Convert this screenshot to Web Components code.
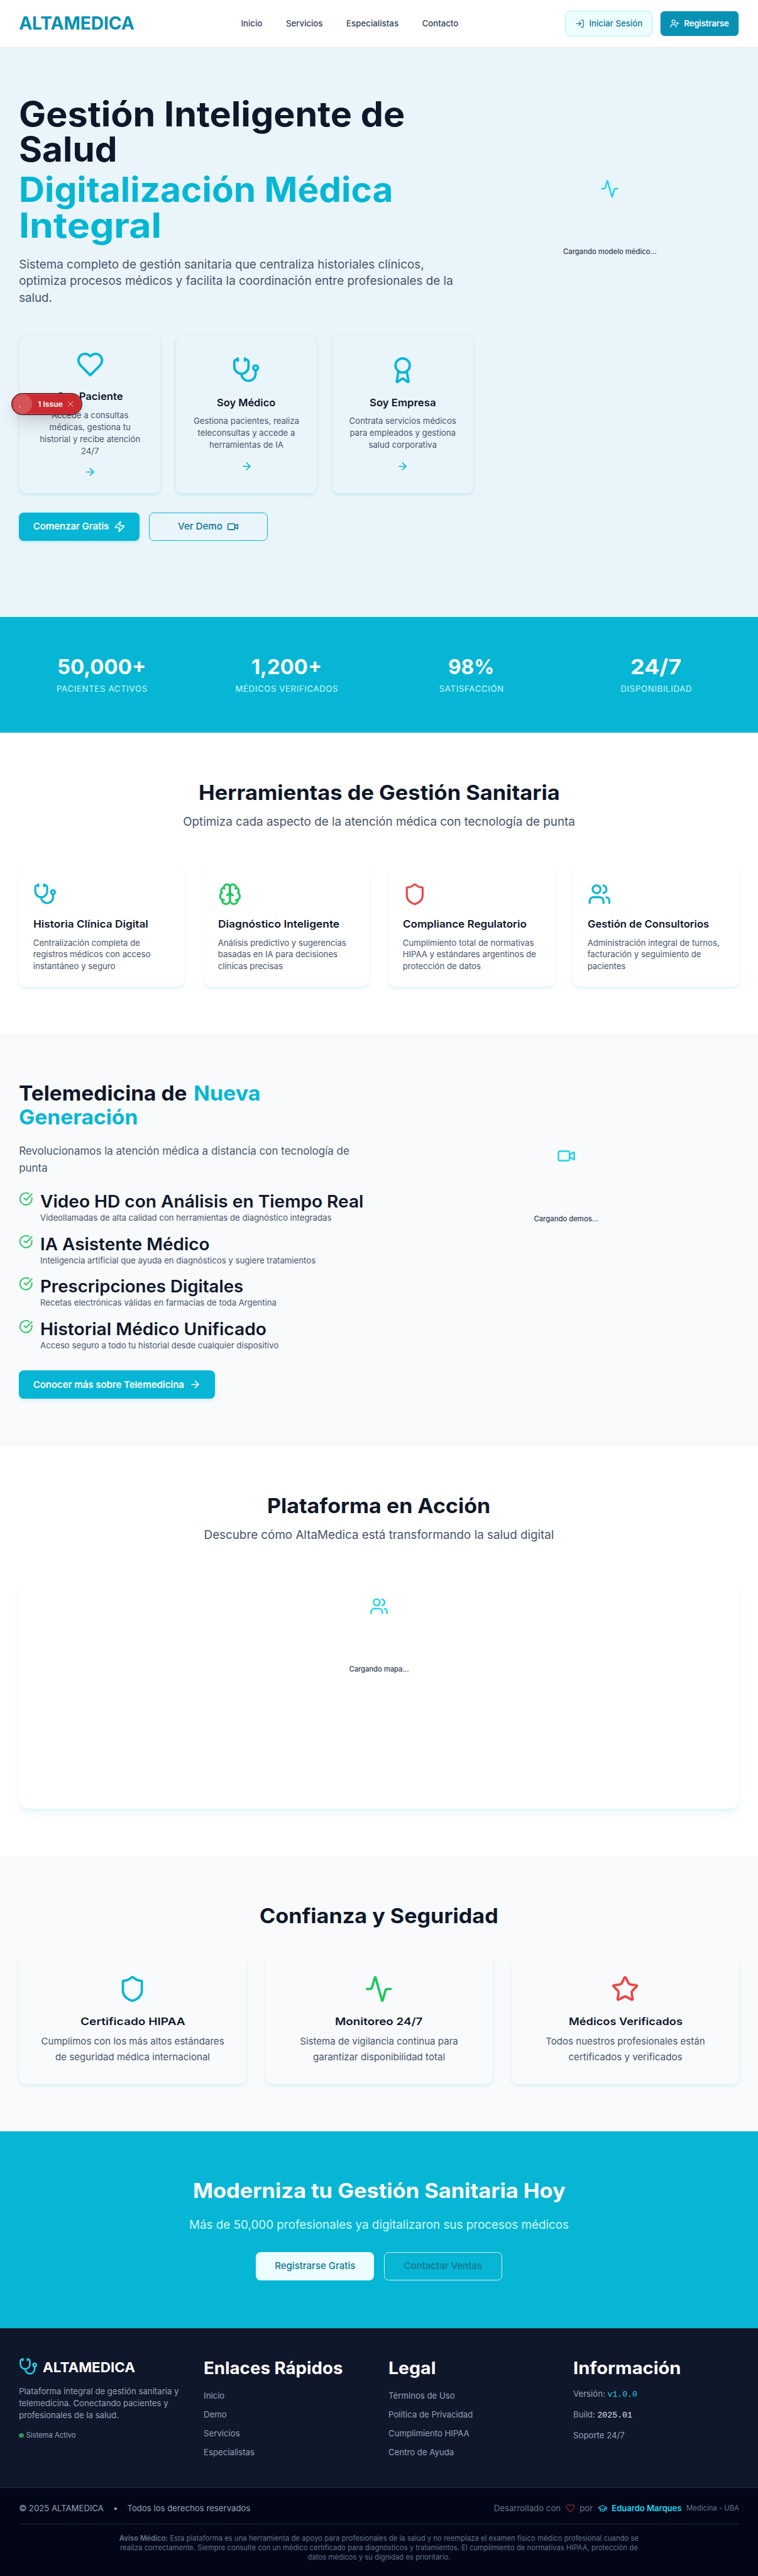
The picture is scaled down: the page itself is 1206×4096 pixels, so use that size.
<!DOCTYPE html>
<html lang="es"><head><meta charset="utf-8"><title>ALTAMEDICA</title>
<style>
html,body{margin:0;padding:0;background:#fff}
body{font-family:Inter,"Liberation Sans",sans-serif}
</style></head><body>
<a-app></a-app>
<script>
const ICONS={
activity:'<path d="M22 12h-2.48a2 2 0 0 0-1.93 1.46l-2.35 8.36a.25.25 0 0 1-.48 0L9.24 2.18a.25.25 0 0 0-.48 0l-2.35 8.36A2 2 0 0 1 4.49 12H2"/>',
heart:'<path d="M19 14c1.49-1.46 3-3.21 3-5.5A5.5 5.5 0 0 0 16.5 3c-1.76 0-3 .5-4.5 2-1.5-1.5-2.74-2-4.5-2A5.5 5.5 0 0 0 2 8.5c0 2.3 1.5 4.05 3 5.5l7 7Z"/>',
steth:'<path d="M11 2v2"/><path d="M5 2v2"/><path d="M5 3H4a2 2 0 0 0-2 2v4a6 6 0 0 0 12 0V5a2 2 0 0 0-2-2h-1"/><path d="M8 15a6 6 0 0 0 12 0v-3"/><circle cx="20" cy="10" r="2"/>',
award:'<path d="m15.477 12.89 1.515 8.526a.5.5 0 0 1-.81.47l-3.58-2.687a1 1 0 0 0-1.197 0l-3.586 2.686a.5.5 0 0 1-.81-.469l1.514-8.526"/><circle cx="12" cy="8" r="6"/>',
arrow:'<path d="M5 12h14"/><path d="m12 5 7 7-7 7"/>',
zap:'<path d="M4 14a1 1 0 0 1-.78-1.63l9.9-10.2a.5.5 0 0 1 .86.46l-1.92 6.02A1 1 0 0 0 13 10h7a1 1 0 0 1 .78 1.63l-9.9 10.2a.5.5 0 0 1-.86-.46l1.92-6.02A1 1 0 0 0 11 14z"/>',
video:'<path d="m16 13 5.223 3.482a.5.5 0 0 0 .777-.416V7.87a.5.5 0 0 0-.752-.432L16 10.5"/><rect x="2" y="6" width="14" height="12" rx="2"/>',
brain:'<path d="M12 5a3 3 0 1 0-5.997.125 4 4 0 0 0-2.526 5.77 4 4 0 0 0 .556 6.588A4 4 0 1 0 12 18Z"/><path d="M12 5a3 3 0 1 1 5.997.125 4 4 0 0 1 2.526 5.77 4 4 0 0 1-.556 6.588A4 4 0 1 1 12 18Z"/><path d="M15 13a4.5 4.5 0 0 1-3-4 4.5 4.5 0 0 1-3 4"/><path d="M17.599 6.5a3 3 0 0 0 .399-1.375"/><path d="M6.003 5.125A3 3 0 0 0 6.401 6.5"/><path d="M3.477 10.896a4 4 0 0 1 .585-.396"/><path d="M19.938 10.5a4 4 0 0 1 .585.396"/><path d="M6 18a4 4 0 0 1-1.967-.516"/><path d="M19.967 17.484A4 4 0 0 1 18 18"/>',
shield:'<path d="M20 13c0 5-3.5 7.5-7.66 8.95a1 1 0 0 1-.67-.01C7.5 20.5 4 18 4 13V6a1 1 0 0 1 1-1c2 0 4.5-1.2 6.24-2.72a1.17 1.17 0 0 1 1.52 0C14.51 3.81 17 5 19 5a1 1 0 0 1 1 1z"/>',
users:'<path d="M16 21v-2a4 4 0 0 0-4-4H6a4 4 0 0 0-4 4v2"/><circle cx="9" cy="7" r="4"/><path d="M22 21v-2a4 4 0 0 0-3-3.87"/><path d="M16 3.13a4 4 0 0 1 0 7.75"/>',
check:'<path d="M21.801 10A10 10 0 1 1 17 3.335"/><path d="m9 11 3 3L22 4"/>',
star:'<path d="M11.525 2.295a.53.53 0 0 1 .95 0l2.31 4.679a2.123 2.123 0 0 0 1.595 1.16l5.166.756a.53.53 0 0 1 .294.904l-3.736 3.638a2.123 2.123 0 0 0-.611 1.878l.882 5.14a.53.53 0 0 1-.771.56l-4.618-2.428a2.122 2.122 0 0 0-1.973 0L6.396 21.01a.53.53 0 0 1-.77-.56l.881-5.139a2.122 2.122 0 0 0-.611-1.879L2.16 9.795a.53.53 0 0 1 .294-.906l5.165-.755a2.122 2.122 0 0 0 1.597-1.16z"/>',
login:'<path d="M15 3h4a2 2 0 0 1 2 2v14a2 2 0 0 1-2 2h-4"/><path d="m10 17 5-5-5-5"/><path d="M15 12H3"/>',
userplus:'<path d="M16 21v-2a4 4 0 0 0-4-4H6a4 4 0 0 0-4 4v2"/><circle cx="9" cy="7" r="4"/><path d="M19 8v6M22 11h-6"/>',
cap:'<path d="M21.42 10.922a1 1 0 0 0-.019-1.838L12.83 5.18a2 2 0 0 0-1.66 0L2.6 9.08a1 1 0 0 0 0 1.832l8.57 3.908a2 2 0 0 0 1.66 0z"/><path d="M22 10v6"/><path d="M6 12.5V16a6 3 0 0 0 12 0v-3.5"/>',
close:'<path d="M3 3l18 18M21 3L3 21"/>'};

/* Stroke icon: <a-icon name size> */
customElements.define('a-icon',class extends HTMLElement{
 connectedCallback(){if(this.shadowRoot)return;const s=this.getAttribute('size')||24;
 this.attachShadow({mode:'open'}).innerHTML=`<style>:host{display:block;flex:none;width:${s}px;height:${s}px}svg{display:block}</style><svg width="${s}" height="${s}" viewBox="0 0 24 24" fill="none" stroke="currentColor" stroke-width="2" stroke-linecap="round" stroke-linejoin="round">${ICONS[this.getAttribute('name')]}</svg>`}});

/* One line of text set to a given measure: <a-line w>. Body text is tracked; "head" widens the heading face */
customElements.define('a-line',class extends HTMLElement{
 connectedCallback(){if(this.shadowRoot)return;
 const w=+this.getAttribute('w');
 this.attachShadow({mode:'open'}).innerHTML=`<style>:host{display:block;white-space:nowrap;width:${w}px;flex:none}:host([c]){margin:0 auto}i{display:block;width:100px;height:0}span{display:block;width:max-content}
 :host([head]) span{font-size:.965em;transform-origin:0 0}</style><span><slot></slot></span><i></i>`;
 const p=this.shadowRoot.querySelector('i'),s=this.shadowRoot.querySelector('span');
 const u=p.getBoundingClientRect().width/100;p.remove();
 const now=s.getBoundingClientRect().width/u;
 if(this.hasAttribute('head')){s.style.transform=`translateY(.024em) scaleX(${w/now})`;return}
 const ls=(w-now)/(this.textContent.length-1);
 s.style.letterSpacing=ls+'px';s.style.marginRight=-ls+'px';}});

const base=`:host{display:block}*{box-sizing:border-box}
section,div,p,h1,h2,h3,h4,ul,li{margin:0;padding:0}
h1,h2,h3,h4{color:#0f172a;font-weight:700}
h2{font-size:36px;line-height:40px}
.sub{font-size:20px;line-height:28px;color:#475569}`;
const def=(n,css,html)=>customElements.define(n,class extends HTMLElement{
 connectedCallback(){if(this.shadowRoot)return;
 this.attachShadow({mode:'open'}).innerHTML=`<style>${base}${css}</style>${typeof html=='function'?html(this):html}`}});

def('a-button',`:host{display:flex;align-items:center;justify-content:center;gap:8px;height:48px;border-radius:8px;font-size:16px;line-height:24px;font-weight:500;padding:0 24px;white-space:nowrap;box-sizing:border-box}
:host([kind=solid]){background:#06b6d4;color:#fff;font-weight:600;box-shadow:0 4px 6px -1px rgba(6,182,212,.12),0 2px 4px -1px rgba(6,182,212,.08)}
:host([kind=line]){border:2px solid #06b6d4;color:#0e7490;width:200px}
:host([kind=pale]){background:#ecfeff;color:#0e7490;width:200px}
:host([kind=ghost]){border:2px solid #e2e8f0;color:#0e7490;width:200px}
:host([kind=login]),:host([kind=join]){height:44px;font-size:14px;padding:0 16px}
:host([kind=login]){background:#ecfeff;border:1px solid #a5f3fc;color:#0e7490}
:host([kind=join]){background:#0891b2;border:1px solid #d5e3ec;color:#fff;font-weight:600}`,'<slot></slot>');

def('a-loader',`:host{display:flex;flex-direction:column;align-items:center;gap:82px;color:#22d3ee}
p{font-size:12px;line-height:16px;font-weight:500;color:#334155}`,
 e=>`<a-icon name="${e.getAttribute('icon')}" size="32"></a-icon><p><slot></slot></p>`);

def('a-header',`header{height:81px;border-bottom:1px solid #e2e8f0;background:#fff;display:flex;align-items:center;justify-content:space-between;padding:0 32px}
.logo{font-size:30px;font-weight:700;color:#0891b2;line-height:36px}
nav{display:flex;gap:40px;font-size:14px;line-height:20px;font-weight:500;color:#334155}
.a{display:flex;gap:12px}`,
`<header><a-line class="logo" w="195">ALTAMEDICA</a-line>
<nav><a-line w="36">Inicio</a-line><a-line w="62">Servicios</a-line><a-line w="88">Especialistas</a-line><a-line w="61">Contacto</a-line></nav>
<div class="a"><a-button kind="login"><a-icon name="login" size="16"></a-icon><a-line w="90">Iniciar Sesión</a-line></a-button><a-button kind="join"><a-icon name="userplus" size="16"></a-icon><a-line w="76">Registrarse</a-line></a-button></div></header>`);

def('a-role',`:host{display:flex;flex-direction:column;align-items:center;justify-content:center;height:268px;padding:24px;border:2px solid #e2e8f0;border-radius:12px;box-sizing:border-box;color:#06b6d4;text-align:center;box-shadow:0 4px 6px -1px rgba(6,182,212,.1),0 2px 4px -1px rgba(6,182,212,.06)}
h3{font-size:18px;line-height:28px;font-weight:600;margin:16px 0 8px}
p{font-size:14px;line-height:20px;color:#475569;margin-bottom:16px;white-space:nowrap}`,
 e=>`<a-icon name="${e.getAttribute('icon')}" size="48"></a-icon><h3><a-line head w="${e.getAttribute('w')}">${e.getAttribute('label')}</a-line></h3><p><slot></slot></p><a-icon name="arrow" size="20"></a-icon>`);

def('a-hero',`section{background:#eaf5fb;height:960px;padding:80px 32px 0;display:flex;gap:12px}
.l{width:768px;flex:none}.r{flex:1;padding-top:142px}
h1{font-size:60px;line-height:60px}
.cy{color:#06b6d4;margin-top:8px}
.sub{margin:24px 0 48px}
.cards{display:grid;grid-template-columns:repeat(3,1fr);gap:24px}
.b{display:flex;gap:16px;margin-top:32px}`,
`<section><div class="l"><h1><a-line head w="652">Gestión Inteligente de</a-line><a-line head w="166">Salud</a-line>
<div class="cy"><a-line head w="632">Digitalización Médica</a-line><a-line head w="241">Integral</a-line></div></h1>
<div class="sub"><a-line w="684">Sistema completo de gestión sanitaria que centraliza historiales clínicos,</a-line><a-line w="733">optimiza procesos médicos y facilita la coordinación entre profesionales de la</a-line><a-line w="56">salud.</a-line></div>
<div class="cards">
<a-role icon="heart" label="Soy Paciente" w="111">Accede a consultas<br>médicas, gestiona tu<br>historial y recibe atención<br>24/7</a-role>
<a-role icon="steth" label="Soy Médico" w="99">Gestiona pacientes, realiza<br>teleconsultas y accede a<br>herramientas de IA</a-role>
<a-role icon="award" label="Soy Empresa" w="112">Contrata servicios médicos<br>para empleados y gestiona<br>salud corporativa</a-role></div>
<div class="b"><a-button kind="solid"><a-line w="128">Comenzar Gratis</a-line><a-icon name="zap" size="20"></a-icon></a-button><a-button kind="line"><a-line w="75">Ver Demo</a-line><a-icon name="video" size="20"></a-icon></a-button></div>
</div><div class="r"><a-loader icon="activity"><a-line w="158">Cargando modelo médico...</a-line></a-loader></div></section>`);

def('a-stats',`section{background:#06b6d4;height:196px;padding:64px 32px;display:grid;grid-template-columns:repeat(4,1fr);gap:32px}
b{display:block;font-size:36px;line-height:40px;font-weight:700;color:#fff;margin-bottom:8px}
p{font-size:14px;line-height:20px;color:#cffafe}`,
'<section>'+[['50,000+',150,'PACIENTES ACTIVOS',153],['1,200+',119,'MÉDICOS VERIFICADOS',173],['98%',78,'SATISFACCIÓN',109],['24/7',86,'DISPONIBILIDAD',120]].map(s=>`<div><b><a-line c head w="${s[1]}">${s[0]}</a-line></b><p><a-line c w="${s[3]}">${s[2]}</a-line></p></div>`).join('')+'</section>');

def('a-features',`section{height:508px;padding:80px 32px;background:#fff}
.sub{margin:16px 0 64px}
.g{display:grid;grid-template-columns:repeat(4,1fr);gap:32px}
.k{height:200px;padding:24px;border-radius:12px;box-shadow:0 4px 6px -1px rgba(6,182,212,.1),0 2px 4px -1px rgba(6,182,212,.06)}
h3{font-size:18px;line-height:28px;font-weight:600;margin:16px 0 8px}
p{font-size:14px;line-height:20px;color:#475569;white-space:nowrap}`,
`<section><h2><a-line c head w="610">Herramientas de Gestión Sanitaria</a-line></h2><div class="sub"><a-line c w="662">Optimiza cada aspecto de la atención médica con tecnología de punta</a-line></div><div class="g">`+
[['steth','#06b6d4','Historia Clínica Digital',194,'Centralización completa de<br>registros médicos con acceso<br>instantáneo y seguro'],
['brain','#22c55e','Diagnóstico Inteligente',205,'Análisis predictivo y sugerencias<br>basadas en IA para decisiones<br>clínicas precisas'],
['shield','#ef4444','Compliance Regulatorio',209,'Cumplimiento total de normativas<br>HIPAA y estándares argentinos de<br>protección de datos'],
['users','#06b6d4','Gestión de Consultorios',205,'Administración integral de turnos,<br>facturación y seguimiento de<br>pacientes']].map(f=>`<div class="k"><a-icon name="${f[0]}" size="40" style="color:${f[1]}"></a-icon><h3><a-line head w="${f[3]}">${f[2]}</a-line></h3><p>${f[4]}</p></div>`).join('')+'</div></section>');

def('a-tele',`section{height:696px;padding:80px 32px;background:#f8fafc;display:flex;gap:48px}
section>div{flex:1}
.t{display:flex;gap:11px}.c{color:#06b6d4}
.lead{font-size:18px;line-height:28px;color:#475569;margin:24px 0}
ul{list-style:none;display:flex;flex-direction:column;gap:16px;margin-bottom:32px}
li{display:flex;gap:12px;color:#22c55e}
li a-icon{margin-top:2px}
h4{font-size:30px;line-height:36px;font-weight:600}
p{font-size:14px;line-height:20px;color:#475569}
section>.r{padding-top:110px}a-button{width:331px}`,
`<section><div><h2><div class="t"><a-line head w="284">Telemedicina de</a-line><a-line head class="c" w="113">Nueva</a-line></div><a-line head class="c" w="201">Generación</a-line></h2>
<div class="lead"><a-line w="558">Revolucionamos la atención médica a distancia con tecnología de</a-line>punta</div><ul>`+
[['Video HD con Análisis en Tiempo Real',546,'Videollamadas de alta calidad con herramientas de diagnóstico integradas'],['IA Asistente Médico',286,'Inteligencia artificial que ayuda en diagnósticos y sugiere tratamientos'],['Prescripciones Digitales',343,'Recetas electrónicas válidas en farmacias de toda Argentina'],['Historial Médico Unificado',382,'Acceso seguro a todo tu historial desde cualquier dispositivo']].map(f=>`<li><a-icon name="check" size="24"></a-icon><div><h4><a-line head w="${f[1]}">${f[0]}</a-line></h4><p>${f[2]}</p></div></li>`).join('')+
`</ul><a-button kind="solid"><a-line w="255">Conocer más sobre Telemedicina</a-line><a-icon name="arrow" size="20"></a-icon></a-button></div>
<div class="r"><a-loader icon="video"><a-line w="109">Cargando demos...</a-line></a-loader></div></section>`);

def('a-platform',`section{height:692px;padding:80px 32px;background:#fff}
.sub{margin:16px 0 64px}
.m{height:384px;border-radius:16px;padding-top:26px;box-shadow:0 10px 15px -3px rgba(6,182,212,.1),0 4px 6px -2px rgba(6,182,212,.05)}`,
`<section><h2><a-line c head w="377">Plataforma en Acción</a-line></h2><div class="sub"><a-line c w="591">Descubre cómo AltaMedica está transformando la salud digital</a-line></div>
<div class="m"><a-loader icon="users"><a-line w="101">Cargando mapa...</a-line></a-loader></div></section>`);

def('a-trust',`section{height:464px;padding:80px 32px;background:#f8fafc}
.g{display:grid;grid-template-columns:repeat(3,1fr);gap:32px;margin-top:48px}
.k{height:216px;padding:32px;border-radius:12px;display:flex;flex-direction:column;align-items:center;box-shadow:0 4px 6px -1px rgba(6,182,212,.1),0 2px 4px -1px rgba(6,182,212,.06)}
h3{font-size:18px;line-height:28px;font-weight:600;margin:16px 0 8px}
p{font-size:16px;line-height:26px;color:#475569}`,
`<section><h2><a-line c head w="403">Confianza y Seguridad</a-line></h2><div class="g">`+
[['shield','#06b6d4','Certificado HIPAA',177,['Cumplimos con los más altos estándares',309],['de seguridad médica internacional',261]],['activity','#22c55e','Monitoreo 24/7',148,['Sistema de vigilancia continua para',267],['garantizar disponibilidad total',223]],['star','#ef4444','Médicos Verificados',192,['Todos nuestros profesionales están',269],['certificados y verificados',192]]].map(f=>`<div class="k"><a-icon name="${f[0]}" size="48" style="color:${f[1]}"></a-icon><h3><a-line head w="${f[3]}">${f[2]}</a-line></h3><p><a-line c w="${f[4][1]}">${f[4][0]}</a-line><a-line c w="${f[5][1]}">${f[5][0]}</a-line></p></div>`).join('')+'</div></section>');

def('a-cta',`section{height:332px;padding:80px 32px;background:#06b6d4}
h2{color:#fff}.sub{color:#cffafe;margin:24px 0 32px}
.b{display:flex;justify-content:center;gap:16px}`,
`<section><h2><a-line c head w="629">Moderniza tu Gestión Sanitaria Hoy</a-line></h2><div class="sub"><a-line c w="641">Más de 50,000 profesionales ya digitalizaron sus procesos médicos</a-line></div>
<div class="b"><a-button kind="pale"><a-line w="136">Registrarse Gratis</a-line></a-button><a-button kind="ghost"><a-line w="132">Contactar Ventas</a-line></a-button></div></section>`);

def('a-footer',`.main{height:269px;background:#0f172a;border-top:1px solid #1e293b;padding:48px 32px;display:grid;grid-template-columns:repeat(4,1fr);gap:32px;color:#94a3b8;font-size:14px;line-height:20px}
.brand{display:flex;gap:8px;color:#22d3ee;margin-bottom:16px}.brand a-line{font-size:24px;line-height:32px;font-weight:700;color:#fff}
.st{display:flex;align-items:center;gap:4px;font-size:12px;line-height:16px;margin-top:16px}
.st i{width:8px;height:8px;border-radius:4px;background:#2f9159}
h3{font-size:30px;line-height:36px;color:#fff;margin-bottom:19px}
ul{list-style:none;display:flex;flex-direction:column;gap:12px}
.inf{gap:13px;margin-top:-3px}
code{font-family:"Liberation Mono",monospace;font-size:14px;color:#e2e8f0}code.v{color:#22d3ee}
.bot{height:150px;background:#020617;border-top:1px solid #1e293b;padding:24px 32px 0;font-size:14px;line-height:20px;color:#94a3b8}
.row{display:flex;justify-content:space-between;padding-bottom:16px;border-bottom:1px solid #1e293b}
.row div{display:flex;align-items:center;gap:8px}.row .cr{gap:16px}
.by{color:#64748b}.by b{color:#22d3ee;font-weight:600}.by small{font-size:12px;color:#64748b}
.dis{font-size:12px;line-height:16px;color:#64748b;margin-top:16px}
.dis strong{font-weight:600}`,
`<div class="main"><div><div class="brand"><a-icon name="steth" size="32"></a-icon><a-line head w="156">ALTAMEDICA</a-line></div>
<p><a-line w="270">Plataforma integral de gestión sanitaria y</a-line><a-line w="252">telemedicina. Conectando pacientes y</a-line>profesionales de la salud.</p><div class="st"><i></i>Sistema Activo</div></div>
<div><h3><a-line head w="235">Enlaces Rápidos</a-line></h3><ul><li>Inicio</li><li>Demo</li><li>Servicios</li><li>Especialistas</li></ul></div>
<div><h3><a-line head w="80">Legal</a-line></h3><ul><li>Términos de Uso</li><li>Política de Privacidad</li><li>Cumplimiento HIPAA</li><li>Centro de Ayuda</li></ul></div>
<div><h3><a-line head w="182">Información</a-line></h3><ul class="inf"><li>Versión: <code class="v">v1.0.0</code></li><li>Build: <code>2025.01</code></li><li>Soporte 24/7</li></ul></div></div>
<div class="bot"><div class="row"><div class="cr"><a-line w="143">© 2025 ALTAMEDICA</a-line><span>•</span><a-line w="208">Todos los derechos reservados</a-line></div>
<div class="by"><a-line w="113">Desarrollado con</a-line><a-icon name="heart" size="16" style="color:#902c35"></a-icon><span>por</span><a-icon name="cap" size="16" style="color:#22d3ee"></a-icon><b><a-line w="118">Eduardo Marques</a-line></b><small><a-line w="89">Medicina - UBA</a-line></small></div></div>
<div class="dis"><a-line c w="877"><strong>Aviso Médico:</strong> Esta plataforma es una herramienta de apoyo para profesionales de la salud y no reemplaza el examen físico médico profesional cuando se</a-line><a-line c w="874">realiza correctamente. Siempre consulte con un médico certificado para diagnósticos y tratamientos. El cumplimiento de normativas HIPAA, protección de</a-line><a-line c w="241">datos médicos y su dignidad es prioritario.</a-line></div></div>`);

/* Floating development notice */
def('a-issue',`:host{position:absolute;left:19px;top:663px}
.p{display:flex;align-items:center;width:120px;height:38px;border-radius:19px;background:#ca2a30;border:1px solid #1c1012;box-shadow:inset 0 0 0 1px #e5484d,0 16px 32px -8px rgba(0,0,0,.24),0 4px 8px rgba(0,0,0,.06);color:#fff;font-size:13px;line-height:16px;font-weight:600;padding-left:2px}
i{width:32px;height:32px;border-radius:16px;background:rgba(255,255,255,.2);font-style:normal;font-size:8px;padding:13px 0 0 10px;line-height:10px;margin-right:10px}
a-icon{margin-left:8px;opacity:.9}`,
`<div class="p"><i>,</i><a-line w="42">1 Issue</a-line><a-icon name="close" size="11"></a-icon></div>`);

def('a-app',`:host{width:1206px;height:4096px;overflow:hidden}
main{zoom:.9421875;width:1280px;position:relative}`,
`<main><a-header></a-header><a-hero></a-hero><a-stats></a-stats><a-features></a-features><a-tele></a-tele><a-platform></a-platform><a-trust></a-trust><a-cta></a-cta><a-footer></a-footer><a-issue></a-issue></main>`);
</script>
</body></html>
